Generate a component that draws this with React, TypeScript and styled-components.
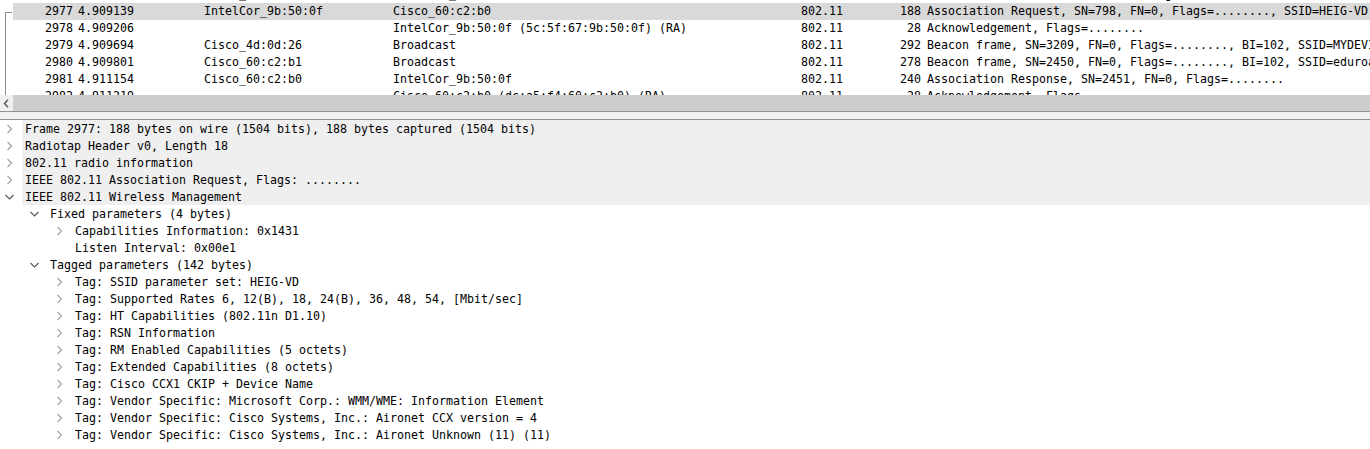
import * as React from "react"
import styled, { createGlobalStyle } from "styled-components"

const GlobalStyle = createGlobalStyle`
  html, body {
    margin: 0;
    padding: 0;
    background: #ffffff;
    overflow: hidden;
  }
  body {
    font-family: "DejaVu Sans Mono", "Liberation Mono", monospace;
    font-size: 11.63px;
    color: #000000;
  }
`

const Window = styled.div`
  width: 1370px;
  height: 449px;
  display: flex;
  flex-direction: column;
  overflow: hidden;
  background: #ffffff;
`

const PacketList = styled.div`
  height: 95px;
  overflow: hidden;
  flex-shrink: 0;
`

const PacketRows = styled.div`
  margin-top: -14px;
`

const PacketRow = styled.div`
  display: flex;
  height: 17px;
  line-height: 17px;
  white-space: pre;
`

const Related = styled.div`
  width: 13px;
  flex-shrink: 0;
  display: flex;
`

const RelatedMark = styled.div<{ $kind: "start" | "mid" | "none" }>`
  margin-left: 5px;
  width: 7px;
  box-sizing: border-box;
  border-left: ${(p) => (p.$kind === "none" ? "none" : "1px solid #8e8e8e")};
  border-top: ${(p) => (p.$kind === "start" ? "1px solid #8e8e8e" : "none")};
  margin-top: ${(p) => (p.$kind === "start" ? "9px" : "0")};
`

const Cells = styled.div<{ $selected?: boolean }>`
  flex: 1;
  min-width: 0;
  display: flex;
  overflow: hidden;
  background: ${(p) => (p.$selected ? "#d9d9d9" : "transparent")};
`

const Cell = styled.div<{ $width?: number; $right?: boolean; $pad?: number }>`
  width: ${(p) => (p.$width ? `${p.$width}px` : "auto")};
  flex: ${(p) => (p.$width ? "0 0 auto" : "1 1 auto")};
  min-width: 0;
  box-sizing: border-box;
  padding-left: ${(p) => p.$pad ?? 0}px;
  text-align: ${(p) => (p.$right ? "right" : "left")};
  overflow: hidden;
`

const HScrollBar = styled.div`
  height: 16px;
  display: flex;
  flex-shrink: 0;
`

const ScrollButton = styled.div`
  width: 13px;
  background: #f0f0f0;
  display: flex;
  align-items: center;
  justify-content: center;
`

const ScrollThumb = styled.div`
  flex: 1;
  background: #cdcdcd;
`

const Splitter = styled.div`
  height: 9px;
  flex-shrink: 0;
  box-sizing: border-box;
  background: #f0f0f0;
  border-top: 1px solid #8b9399;
  border-bottom: 1px solid #8b9399;
`

const DetailTree = styled.div`
  flex: 1;
  overflow: hidden;
`

const TreeRow = styled.div<{ $level: number }>`
  display: flex;
  height: 17px;
  padding-left: ${(p) => p.$level * 25}px;
  white-space: pre;
`

const Toggle = styled.div`
  width: 22px;
  height: 17px;
  flex-shrink: 0;
`

const TreeLabel = styled.div<{ $band?: boolean }>`
  flex: 1;
  box-sizing: border-box;
  height: 17px;
  padding: 1px 0 0 3px;
  line-height: 17px;
  background: ${(p) => (p.$band ? "#efefef" : "transparent")};
`

type Packet = {
  no: number
  time: string
  src: string
  dst: string
  proto: string
  len: number
  info: string
  related: "start" | "mid" | "none"
  selected?: boolean
}

const packets: Packet[] = [
  { no: 2976, time: "4.908980", src: "Cisco_60:c2:b0", dst: "IntelCor_9b:50:0f", proto: "802.11", len: 59, info: "Authentication, SN=2449, FN=0, Flags=........", related: "none" },
  { no: 2977, time: "4.909139", src: "IntelCor_9b:50:0f", dst: "Cisco_60:c2:b0", proto: "802.11", len: 188, info: "Association Request, SN=798, FN=0, Flags=........, SSID=HEIG-VD", related: "start", selected: true },
  { no: 2978, time: "4.909206", src: "", dst: "IntelCor_9b:50:0f (5c:5f:67:9b:50:0f) (RA)", proto: "802.11", len: 28, info: "Acknowledgement, Flags=........", related: "mid" },
  { no: 2979, time: "4.909694", src: "Cisco_4d:0d:26", dst: "Broadcast", proto: "802.11", len: 292, info: "Beacon frame, SN=3209, FN=0, Flags=........, BI=102, SSID=MYDEVICES", related: "mid" },
  { no: 2980, time: "4.909801", src: "Cisco_60:c2:b1", dst: "Broadcast", proto: "802.11", len: 278, info: "Beacon frame, SN=2450, FN=0, Flags=........, BI=102, SSID=eduroam", related: "mid" },
  { no: 2981, time: "4.911154", src: "Cisco_60:c2:b0", dst: "IntelCor_9b:50:0f", proto: "802.11", len: 240, info: "Association Response, SN=2451, FN=0, Flags=........", related: "mid" },
  { no: 2982, time: "4.911219", src: "", dst: "Cisco_60:c2:b0 (dc:a5:f4:60:c2:b0) (RA)", proto: "802.11", len: 28, info: "Acknowledgement, Flags=........", related: "mid" },
]

type Node = {
  level: number
  state: "collapsed" | "expanded" | "leaf"
  text: string
  band?: boolean
}

const details: Node[] = [
  { level: 0, state: "collapsed", text: "Frame 2977: 188 bytes on wire (1504 bits), 188 bytes captured (1504 bits)", band: true },
  { level: 0, state: "collapsed", text: "Radiotap Header v0, Length 18", band: true },
  { level: 0, state: "collapsed", text: "802.11 radio information", band: true },
  { level: 0, state: "collapsed", text: "IEEE 802.11 Association Request, Flags: ........", band: true },
  { level: 0, state: "expanded", text: "IEEE 802.11 Wireless Management", band: true },
  { level: 1, state: "expanded", text: "Fixed parameters (4 bytes)" },
  { level: 2, state: "collapsed", text: "Capabilities Information: 0x1431" },
  { level: 2, state: "leaf", text: "Listen Interval: 0x00e1" },
  { level: 1, state: "expanded", text: "Tagged parameters (142 bytes)" },
  { level: 2, state: "collapsed", text: "Tag: SSID parameter set: HEIG-VD" },
  { level: 2, state: "collapsed", text: "Tag: Supported Rates 6, 12(B), 18, 24(B), 36, 48, 54, [Mbit/sec]" },
  { level: 2, state: "collapsed", text: "Tag: HT Capabilities (802.11n D1.10)" },
  { level: 2, state: "collapsed", text: "Tag: RSN Information" },
  { level: 2, state: "collapsed", text: "Tag: RM Enabled Capabilities (5 octets)" },
  { level: 2, state: "collapsed", text: "Tag: Extended Capabilities (8 octets)" },
  { level: 2, state: "collapsed", text: "Tag: Cisco CCX1 CKIP + Device Name" },
  { level: 2, state: "collapsed", text: "Tag: Vendor Specific: Microsoft Corp.: WMM/WME: Information Element" },
  { level: 2, state: "collapsed", text: "Tag: Vendor Specific: Cisco Systems, Inc.: Aironet CCX version = 4" },
  { level: 2, state: "collapsed", text: "Tag: Vendor Specific: Cisco Systems, Inc.: Aironet Unknown (11) (11)" },
]

const Chevron: React.FC<{ state: Node["state"] }> = ({ state }) => {
  if (state === "leaf") return <Toggle />
  return (
    <Toggle>
      <svg width="22" height="17" viewBox="0 0 22 17">
        {state === "collapsed" ? (
          <path d="M7.5 5 L11.5 9 L7.5 13" fill="none" stroke="#a3a3a3" strokeWidth="1.2" />
        ) : (
          <path d="M5.5 7 L9.5 11 L13.5 7" fill="none" stroke="#5a5a5a" strokeWidth="1.2" />
        )}
      </svg>
    </Toggle>
  )
}

const App: React.FC = () => {
  return (
    <>
      <GlobalStyle />
      <Window>
        <PacketList>
          <PacketRows>
            {packets.map((p) => (
              <PacketRow key={p.no}>
                <Related>
                  <RelatedMark $kind={p.related} />
                </Related>
                <Cells $selected={p.selected}>
                  <Cell $width={60} $right>{p.no}</Cell>
                  <Cell $width={131} $pad={5}>{p.time}</Cell>
                  <Cell $width={189}>{p.src}</Cell>
                  <Cell $width={408}>{p.dst}</Cell>
                  <Cell $width={79}>{p.proto}</Cell>
                  <Cell $width={41} $right>{p.len}</Cell>
                  <Cell $pad={6}>{p.info}</Cell>
                </Cells>
              </PacketRow>
            ))}
          </PacketRows>
        </PacketList>
        <HScrollBar>
          <ScrollButton>
            <svg width="7" height="9" viewBox="0 0 7 9">
              <path d="M5 0.8 L1.6 4.5 L5 8.2" fill="none" stroke="#606060" strokeWidth="1.6" />
            </svg>
          </ScrollButton>
          <ScrollThumb />
        </HScrollBar>
        <Splitter />
        <DetailTree>
          {details.map((n, i) => (
            <TreeRow key={i} $level={n.level}>
              <Chevron state={n.state} />
              <TreeLabel $band={n.band}>{n.text}</TreeLabel>
            </TreeRow>
          ))}
        </DetailTree>
      </Window>
    </>
  )
}

export default App
